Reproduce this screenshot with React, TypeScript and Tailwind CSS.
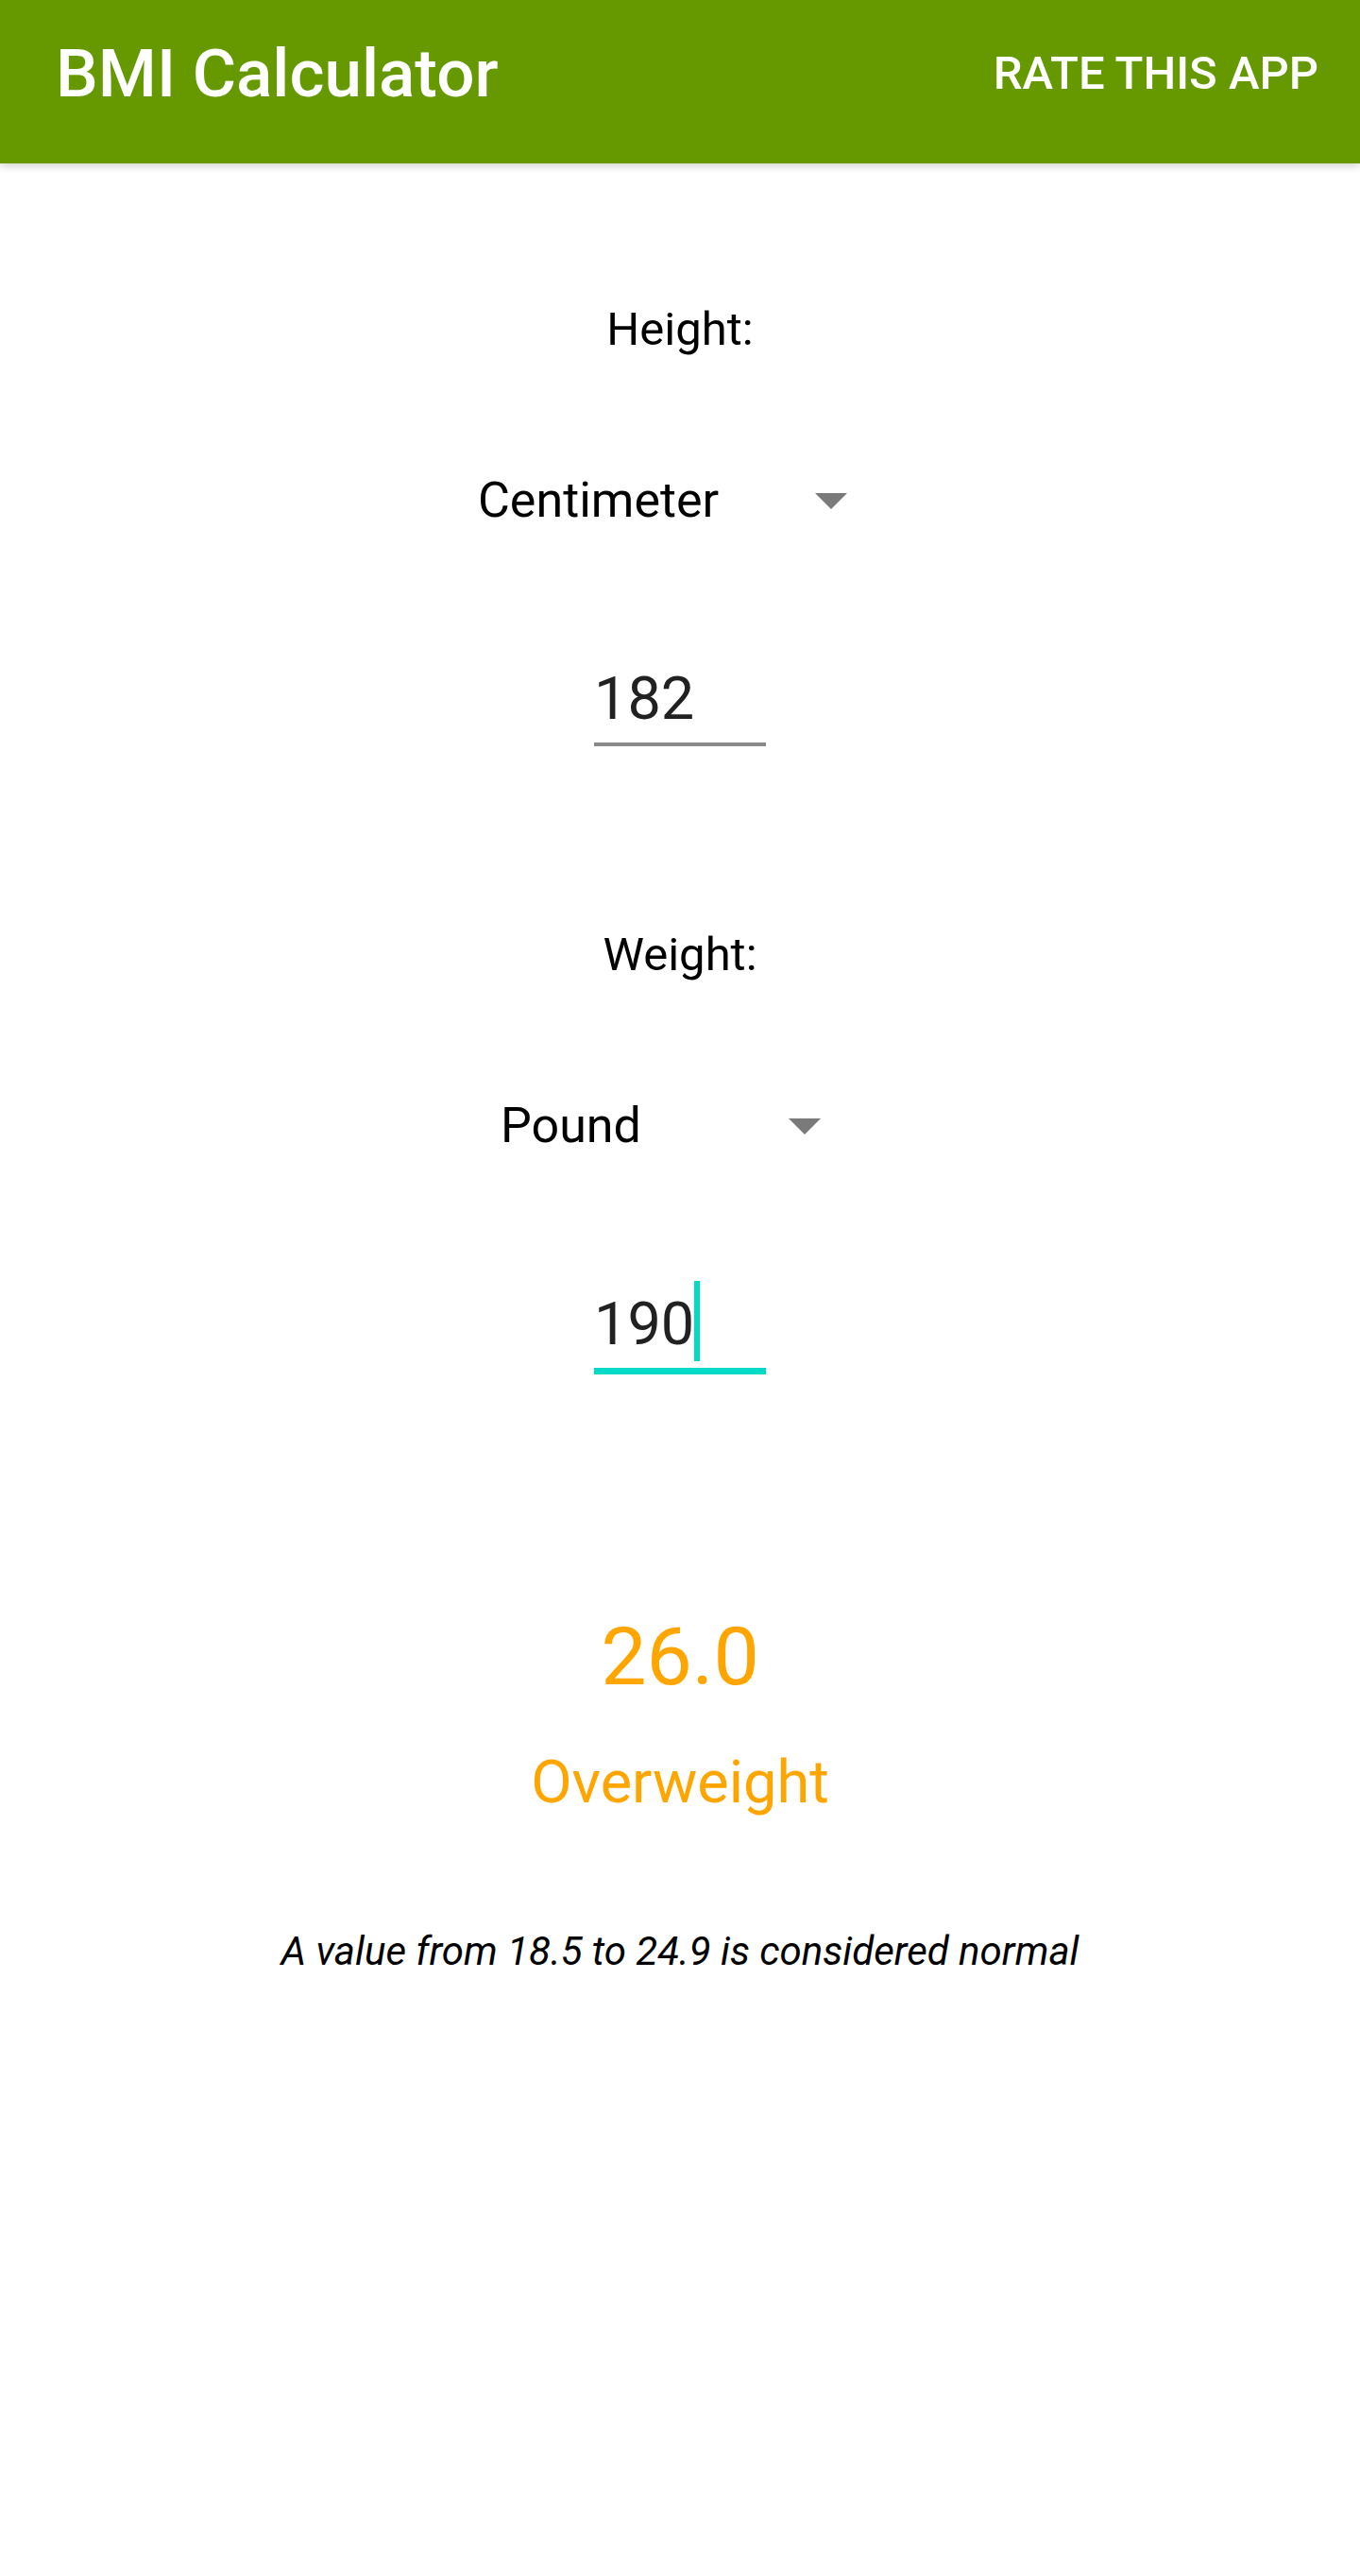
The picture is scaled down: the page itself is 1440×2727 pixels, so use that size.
import React from "react";

function Caret() {
    return (
        <svg width="34" height="17" viewBox="0 0 34 17" className="shrink-0">
            <polygon points="0,0 34,0 17,17" fill="#7a7a7a" />
        </svg>
    );
}

function UnitSpinner({ label, widthClass }: { label: string; widthClass: string }) {
    return (
        <div className={`flex items-center justify-between pl-[2px] ${widthClass}`}>
            <span className="text-[52px] leading-none text-black">{label}</span>
            <Caret />
        </div>
    );
}

export default function App() {
    return (
        <div className="min-h-[2727px] bg-white font-['Roboto','Liberation_Sans',sans-serif]">
            {/* Toolbar */}
            <header className="relative z-10 flex h-[173px] items-start justify-between bg-[#669900] pl-[59px] pr-[44px] shadow-[0_3px_8px_rgba(0,0,0,0.18)]">
                <h1 className="mt-[42px] text-[71px] font-medium leading-none text-white">BMI Calculator</h1>
                <button className="mt-[53px] text-[49px] font-medium uppercase leading-none text-white">
                    Rate this app
                </button>
            </header>

            <main className="flex flex-col items-center">
                {/* Height */}
                <p className="mt-[151px] text-[49px] leading-none text-black">Height:</p>
                <div className="mt-[131px]">
                    <UnitSpinner label="Centimeter" widthClass="w-[432px] pr-[39px]" />
                </div>
                <div className="mt-[152px] w-[182px] border-b-[4px] border-[#8a8a8a] pb-[15px]">
                    <span className="text-[63px] leading-none text-[#212121]">182</span>
                </div>

                {/* Weight */}
                <p className="mt-[196px] text-[49px] leading-none text-black">Weight:</p>
                <div className="mt-[131px]">
                    <UnitSpinner label="Pound" widthClass="w-[384px] pr-[43px]" />
                </div>
                <div className="mt-[152px] flex w-[182px] items-start border-b-[7px] border-[#03dac5] pb-[15px]">
                    <span className="text-[63px] leading-none text-[#212121]">190</span>
                    <span className="-mb-[8px] -mt-[14px] h-[85px] w-[6px] bg-[#03dac5]" />
                </div>

                {/* Result */}
                <p className="mt-[256px] text-[86px] leading-none text-[#ffa500]">26.0</p>
                <p className="mt-[58px] text-[63px] leading-none text-[#ffa500]">Overweight</p>
                <p className="mt-[127px] text-[42px] italic leading-none text-black">
                    A value from 18.5 to 24.9 is considered normal
                </p>
            </main>
        </div>
    );
}
